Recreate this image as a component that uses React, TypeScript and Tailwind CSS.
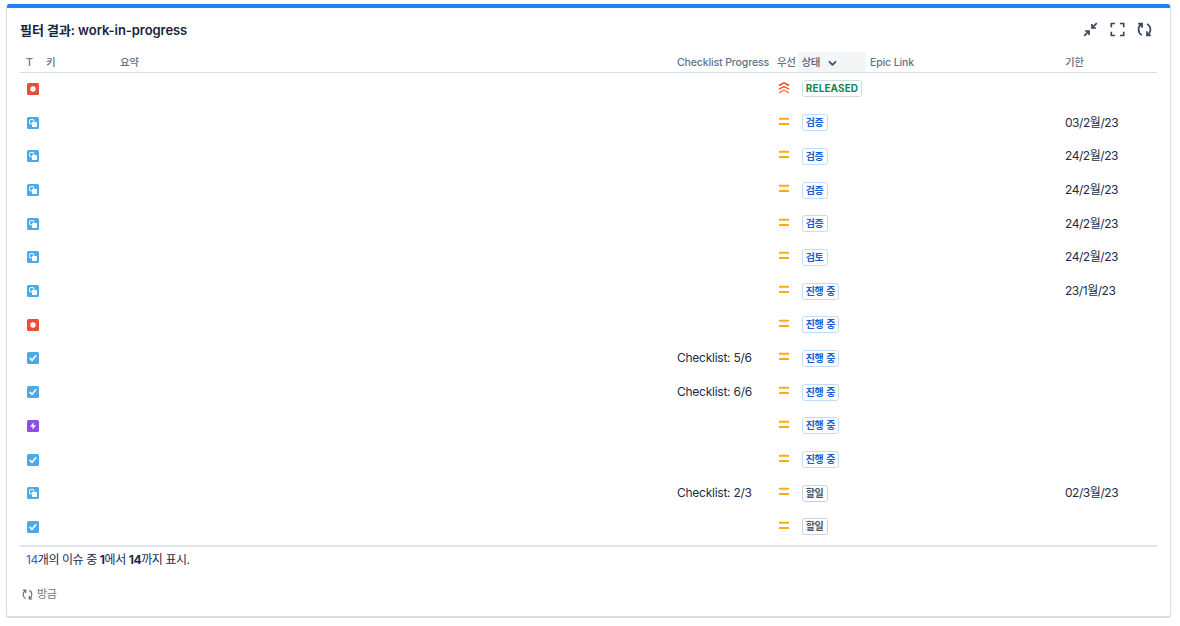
import React from "react";

type Kind = "bug" | "sub" | "task" | "epic";
type Row = { kind: Kind; status: string; tone: "green" | "blue" | "gray"; top?: boolean; check?: string; due?: string };

const rows: Row[] = [
  { kind: "bug", status: "RELEASED", tone: "green", top: true },
  { kind: "sub", status: "검증", tone: "blue", due: "03/2월/23" },
  { kind: "sub", status: "검증", tone: "blue", due: "24/2월/23" },
  { kind: "sub", status: "검증", tone: "blue", due: "24/2월/23" },
  { kind: "sub", status: "검증", tone: "blue", due: "24/2월/23" },
  { kind: "sub", status: "검토", tone: "blue", due: "24/2월/23" },
  { kind: "sub", status: "진행 중", tone: "blue", due: "23/1월/23" },
  { kind: "bug", status: "진행 중", tone: "blue" },
  { kind: "task", status: "진행 중", tone: "blue", check: "Checklist: 5/6" },
  { kind: "task", status: "진행 중", tone: "blue", check: "Checklist: 6/6" },
  { kind: "epic", status: "진행 중", tone: "blue" },
  { kind: "task", status: "진행 중", tone: "blue" },
  { kind: "sub", status: "할일", tone: "gray", check: "Checklist: 2/3", due: "02/3월/23" },
  { kind: "task", status: "할일", tone: "gray" },
];

const tones = {
  green: "border-[#cfdcdf] text-[#16845b] tracking-[0.1px]",
  blue: "border-[#c2dbff] text-[#1660d6] tracking-[-0.4px] [word-spacing:1px]",
  gray: "border-[#ccd1d9] text-[#4a566c] tracking-[-0.4px]",
};

const fills: Record<Kind, string> = { bug: "#e94f37", sub: "#4babe8", task: "#4babe8", epic: "#904ee2" };

function TypeIcon({ kind }: { kind: Kind }) {
  return (
    <svg className="ml-px block size-3" viewBox="0 0 16 16">
      <rect width="16" height="16" rx="2" fill={fills[kind]} />
      {kind === "bug" && <circle cx="8" cy="8" r="3.6" fill="#fff" />}
      {kind === "sub" && (
        <>
          <rect x="3.5" y="3.5" width="5.6" height="5.6" rx="0.8" fill="none" stroke="#fff" strokeWidth="1.3" />
          <rect x="6.7" y="6.7" width="6.6" height="6.6" rx="1" fill="#fff" />
        </>
      )}
      {kind === "task" && (
        <path d="M4.2 8.6l2.6 2.5 4.9-6" fill="none" stroke="#fff" strokeWidth="2.2" strokeLinecap="round" strokeLinejoin="round" />
      )}
      {kind === "epic" && <path d="M8.7 3v4.1h3.2L7.5 13V9H4.2z" fill="#fff" />}
    </svg>
  );
}

function Priority({ top }: { top?: boolean }) {
  if (top)
    return (
      <svg className="ml-[0.7px] block h-3 w-3 -translate-y-[1.5px]" viewBox="0 0 12 12" fill="none" strokeWidth="1.5" strokeLinejoin="round">
        <path d="M1 4l5-2.7L11 4" stroke="#e5462b" />
        <path d="M1 7.7L6 5l5 2.7" stroke="#ef6030" />
        <path d="M1 11.4l5-2.7 5 2.7" stroke="#f58345" />
      </svg>
    );
  return (
    <svg className="ml-[0.7px] block h-3 w-3 -translate-y-px" viewBox="0 0 12 12" fill="#ffa913">
      <rect x="1" y="1.8" width="10" height="1.9" rx="0.3" />
      <rect x="1" y="7.1" width="10" height="1.9" rx="0.3" />
    </svg>
  );
}

function Refresh({ className }: { className: string }) {
  return (
    <svg className={className} viewBox="0 0 16 16" fill="none" stroke="currentColor">
      <path d="M5.2 14C.6 11.4.6 5 4.6 2.4M1.2 1.8h4.2v4.3" />
      <path d="M10.8 2c4.6 2.6 4.6 9 .6 11.6M14.8 14.2h-4.2V9.9" />
    </svg>
  );
}

const cols =
  "grid grid-cols-[20px_74px_557px_100px_21px_72px_195px_1fr] items-center pl-1.5";

export default function App() {
  return (
    <div className="h-[626px] w-[1180px] bg-white px-1.5 pt-1 text-[12px] text-[#1c2b4a] [font-family:Inter,'Noto_Sans_CJK_KR',sans-serif]">
      <section className="flex h-[613px] w-[1165px] flex-col overflow-hidden rounded-[3px] border-x border-b border-[#dcdfe6] bg-white shadow-[0_1px_1px_#d3d6dd]">
        <div className="-mx-px h-[3.5px] shrink-0 bg-[#2180fb]" />
        <header className="mr-[18.5px] ml-[13px] flex h-[44px] shrink-0 items-center justify-between">
          <h1 className="text-[13px] leading-4 font-semibold tracking-[-0.06px] text-[#172340]">
            필터 결과: work-in-progress
          </h1>
          <div className="flex items-center gap-3 text-[#3a4760]">
            <svg className="size-[15px]" viewBox="0 0 16 16" fill="none" stroke="currentColor" strokeWidth="1.8">
              <path d="M14.7 1.3L10 6M9.6 2.2v4.2h4.2M1.3 14.7L6 10M2.2 9.6h4.2v4.2" />
            </svg>
            <svg className="size-[15px]" viewBox="0 0 16 16" fill="none" stroke="currentColor" strokeWidth="1.8">
              <path d="M1.4 5.6V1.6h4M10.6 1.6h4v4M14.6 10.4v4h-4M5.4 14.4h-4v-4" />
            </svg>
            <Refresh className="size-[15px] stroke-[1.8]" />
          </div>
        </header>
        <div className="mr-[13px] ml-[13px]">
          <div className={`${cols} h-[21px] border-b-[1.5px] border-[#d5dde1] text-[10.5px] leading-[17px] font-medium tracking-[-0.12px] text-[#65718a]`}>
            <span className="pt-px">T</span>
            <span className="pt-px">키</span>
            <span className="pt-px tracking-[-0.4px]">요약</span>
            <span className="pt-px whitespace-nowrap">Checklist Progress</span>
            <span className="pt-px tracking-[-0.4px] whitespace-nowrap">우선</span>
            <span className="flex h-full w-[68px] items-center gap-2 bg-[#f4f5f7] pt-px pl-[3.5px] tracking-[-0.4px] text-[#56627a]">
              상태
              <svg className="mt-0.5 h-[7px] w-[9px]" viewBox="0 0 9 7" fill="none" stroke="#42506a" strokeWidth="1.8" strokeLinecap="round" strokeLinejoin="round">
                <path d="M1.5 1.8l3 3 3-3" />
              </svg>
            </span>
            <span className="pt-px">Epic Link</span>
            <span className="pt-px tracking-[-0.4px]">기한</span>
          </div>
          <div className="flow-root h-[474px] border-b-2 border-[#e1e3ea]">
            <div className="-mt-[0.4px]">
              {rows.map((r, i) => (
                <div key={i} className={`${cols} h-[33.7px] leading-4`}>
                  <TypeIcon kind={r.kind} />
                  <span />
                  <span />
                  <span className="tracking-[-0.25px]">{r.check}</span>
                  <Priority top={r.top} />
                  <span className="flex pl-[3.5px]">
                    <span className={`flex h-[17px] items-center rounded-[2.5px] border px-[3.3px] pb-px text-[10px] leading-none font-bold whitespace-nowrap ${tones[r.tone]}`}>
                      {r.status}
                    </span>
                  </span>
                  <span />
                  <span className="tracking-[-0.45px]">{r.due}</span>
                </div>
              ))}
            </div>
          </div>
          <p className="pt-[5px] pl-1.5 leading-4 tracking-[-0.42px]">
            <span className="text-[#1f66d8]">14</span>개의 이슈 중 <b>1</b>에서 <b>14</b>까지 표시.
          </p>
          <div className="mt-[18.5px] flex items-center gap-1 pl-0.5 text-[11px] leading-4 tracking-[-0.3px] text-[#68748a]">
            <Refresh className="size-[11px] stroke-[1.8]" />
            방금
          </div>
        </div>
      </section>
    </div>
  );
}
